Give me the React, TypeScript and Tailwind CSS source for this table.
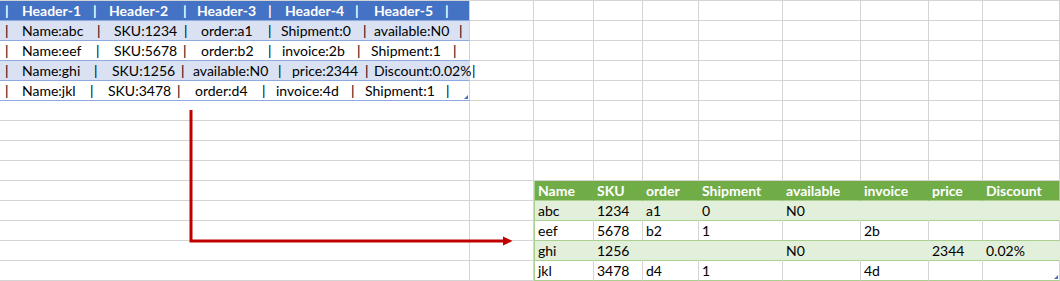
// pipe x = ink centre, text x = ink start (px, measured on the sheet)
type Token = [string, number];

const leftRows: Token[][] = [
  [["|", 7], ["Header-1", 23], ["|", 95], ["Header-2", 110], ["|", 185], ["Header-3", 198], ["|", 270], ["Header-4", 286], ["|", 357], ["Header-5", 375], ["|", 447]],
  [["|", 7], ["Name:abc", 23], ["|", 99], ["SKU:1234", 115], ["|", 186], ["order:a1", 202], ["|", 270], ["Shipment:0", 282], ["|", 365], ["available:N0", 375], ["|", 461]],
  [["|", 7], ["Name:eef", 23], ["|", 98], ["SKU:5678", 115], ["|", 185], ["order:b2", 202], ["|", 270], ["invoice:2b", 283], ["|", 359], ["Shipment:1", 372], ["|", 455]],
  [["|", 7], ["Name:ghi", 23], ["|", 96], ["SKU:1256", 113], ["|", 183], ["available:N0", 194], ["|", 280], ["price:2344", 293], ["|", 367], ["Discount:0.02%", 375], ["|", 474]],
  [["|", 7], ["Name:jkl", 23], ["|", 92], ["SKU:3478", 109], ["|", 179], ["order:d4", 196], ["|", 264], ["invoice:4d", 277], ["|", 353], ["Shipment:1", 366], ["|", 448]],
];

const headers = ["Name", "SKU", "order", "Shipment", "available", "invoice", "price", "Discount"];
const records = [
  ["abc", "1234", "a1", "0", "N0", "", "", ""],
  ["eef", "5678", "b2", "1", "", "2b", "", ""],
  ["ghi", "1256", "", "", "N0", "", "2344", "0.02%"],
  ["jkl", "3478", "d4", "1", "", "4d", "", ""],
];

function Handle() {
  return (
    <span className="absolute right-[1px] bottom-[1px] w-0 h-0 border-l-[4px] border-l-transparent border-b-[4px] border-b-[#4472c4]" />
  );
}

function CellText({ tokens }: { tokens: Token[] }) {
  const lefts = tokens.map(([t, x]) => (t === "|" ? x - 2 : x - 1));
  return (
    <div className="flex whitespace-pre">
      {tokens.map(([t], i) => {
        const left = lefts[i];
        const next = i < tokens.length - 1 ? lefts[i + 1] : left + 6;
        const style = i === 0 ? { marginLeft: left, width: next - left } : { width: next - left };
        return (
          <span key={i} className="shrink-0" style={style}>
            {t}
          </span>
        );
      })}
    </div>
  );
}

function LeftCell({ row }: { row: number }) {
  const header = row === 0;
  const banded = row === 1 || row === 3;
  return (
    <div
      className={`relative h-full overflow-visible z-10 border-b border-b-[#8ea9db] ${
        header
          ? "bg-[#4472c4] text-white font-bold"
          : banded
          ? "bg-[#d9e1f2] text-black"
          : "bg-white text-black"
      } ${row === 3 ? "border-r border-r-transparent" : "border-r border-r-[#c6d2e8]"}`}
    >
      <CellText tokens={leftRows[row]} />
      {row === 4 && <Handle />}
    </div>
  );
}

function TableCell({ row, col }: { row: number; col: number }) {
  // row 9 holds the header, rows 10..13 the records
  const header = row === 9;
  const rec = records[row - 10];
  const banded = row === 10 || row === 12;
  const text = header ? headers[col - 2] : rec[col - 2];
  const last = col === 9;
  return (
    <div
      className={`relative h-full pl-[3px] border-b border-b-[#a9d08e] ${
        col === 2 ? "border-l border-l-[#a9d08e] pl-[2px]" : ""
      } ${
        header
          ? "bg-[#70ad47] text-white font-bold border-r border-r-[#70ad47]"
          : banded
          ? "bg-[#e2efda] text-black border-r border-r-[#e2efda]"
          : "bg-white text-black border-r border-r-[#d4d4d4]"
      } ${last ? "border-r-[#a9d08e]" : ""}`}
    >
      {text}
      {row === 13 && last && <Handle />}
    </div>
  );
}

function GridCell({ row, col }: { row: number; col: number }) {
  if (col === 0 && row <= 4) return <LeftCell row={row} />;
  if (row >= 9 && col >= 2) return <TableCell row={row} col={col} />;
  return <div className="h-full border-r border-b border-[#d4d4d4]" />;
}

function Arrow() {
  return (
    <svg className="absolute left-0 top-0 pointer-events-none z-20" width="1060" height="281">
      <path d="M191 110 V241 H504" fill="none" stroke="#c00000" strokeWidth="3" />
      <polygon points="503,236.5 512.5,241 503,245.5" fill="#c00000" />
    </svg>
  );
}

export default function App() {
  return (
    <div
      className="relative w-[1060px] h-[281px] bg-white overflow-hidden text-[14px] leading-[19px] text-black"
      style={{ fontFamily: "Lato, 'Liberation Sans', sans-serif" }}
    >
      <div className="grid grid-cols-[470px_64px_60px_49px_56px_84px_78px_68px_54px_77px] auto-rows-[20px] border-t border-[#d4d4d4]">
        {Array.from({ length: 14 }).map((_, row) =>
          Array.from({ length: 10 }).map((_, col) => (
            <GridCell key={`${row}-${col}`} row={row} col={col} />
          ))
        )}
      </div>
      <Arrow />
    </div>
  );
}
